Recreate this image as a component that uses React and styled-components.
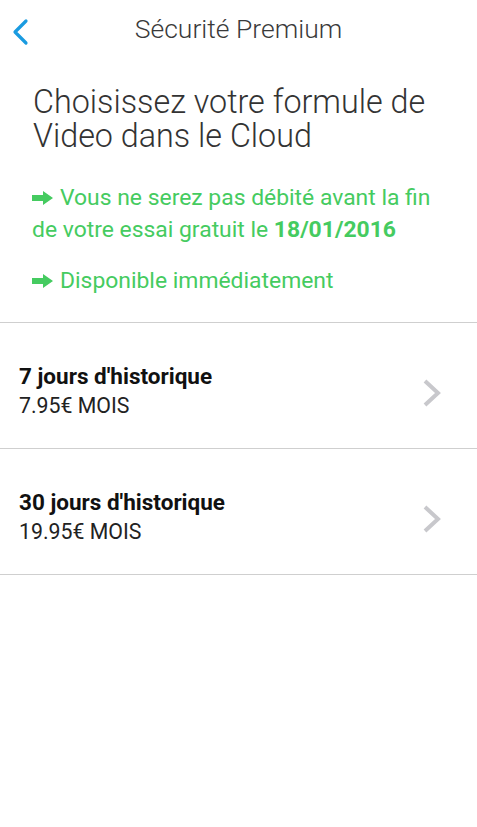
import React from "react";
import styled, { createGlobalStyle } from "styled-components";

const Global = createGlobalStyle`
  html, body { margin: 0; padding: 0; background: #fff; }
  body { font-family: Roboto, "Noto Sans", "Liberation Sans", sans-serif; -webkit-font-smoothing: antialiased; }
`;

const Page = styled.div`
  width: 477px;
  min-height: 827px;
  background: #fff;
`;

const Header = styled.header`
  position: relative;
  height: 58px;
  display: flex;
  align-items: center;
  justify-content: center;
`;

const BackButton = styled.button`
  position: absolute;
  left: 8px;
  top: 18px;
  border: 0;
  background: none;
  padding: 0;
  width: 24px;
  height: 28px;
  display: flex;
  align-items: center;
  justify-content: center;
`;

const Title = styled.h1`
  margin: 0;
  font-size: 26.5px;
  line-height: 58px;
  font-weight: 300;
  color: #3a3a3a;
`;

const Headline = styled.h2`
  margin: 27px 0 0;
  padding: 0 33px;
  font-size: 32.3px;
  line-height: 34px;
  font-weight: 300;
  color: #333;
`;

const Note = styled.p`
  margin: ${(p) => p.$top}px 0 0;
  padding: 0 32px;
  font-size: 22.9px;
  line-height: 32px;
  color: #45cb60;
  b { font-weight: 700; }
`;

const Arrow = styled.svg`
  display: inline-block;
  width: 21px;
  height: 14px;
  margin-right: 7px;
  vertical-align: 0px;
`;

const List = styled.ul`
  list-style: none;
  margin: 25px 0 0;
  padding: 0;
  border-top: 1px solid #cfcfcf;
`;

const Row = styled.li`
  box-sizing: border-box;
  height: 126px;
  padding: 10px 35px 0 19px;
  display: flex;
  align-items: center;
  justify-content: space-between;
  border-bottom: 1px solid #cfcfcf;
`;

const RowText = styled.div`
  display: flex;
  flex-direction: column;
  gap: 2px;
`;

const RowTitle = styled.div`
  font-size: 22.5px;
  line-height: 27px;
  font-weight: 700;
  color: #111;
`;

const RowPrice = styled.div`
  font-size: 21.3px;
  line-height: 27px;
  font-weight: 400;
  color: #222;
`;

const Chevron = styled.svg`
  width: 20px;
  height: 28px;
  margin-top: 4px;
`;

const GreenArrow = () => (
  <Arrow viewBox="0 0 21 14">
    <path d="M0 4 H11 V0 L21 7 L11 14 V10 H0 Z" fill="#45cb60" />
  </Arrow>
);

const plans = [
  { title: "7 jours d'historique", price: "7.95€ MOIS" },
  { title: "30 jours d'historique", price: "19.95€ MOIS" },
];

export default function App() {
  return (
    <Page>
      <Global />
      <Header>
        <BackButton aria-label="Retour">
          <svg width="20" height="28" viewBox="0 0 20 28">
            <path d="M16 3 L5 14 L16 25" fill="none" stroke="#1a9be0" strokeWidth="3.2" strokeLinecap="round" strokeLinejoin="round" />
          </svg>
        </BackButton>
        <Title>Sécurité Premium</Title>
      </Header>
      <Headline>
        Choisissez votre formule de
        <br />
        Video dans le Cloud
      </Headline>
      <Note $top={29}>
        <GreenArrow />
        Vous ne serez pas débité avant la fin de votre essai gratuit le <b>18/01/2016</b>
      </Note>
      <Note $top={19}>
        <GreenArrow />
        Disponible immédiatement
      </Note>
      <List>
        {plans.map((p) => (
          <Row key={p.title}>
            <RowText>
              <RowTitle>{p.title}</RowTitle>
              <RowPrice>{p.price}</RowPrice>
            </RowText>
            <Chevron viewBox="0 0 20 28">
              <path d="M3 2 L16 14 L3 26" fill="none" stroke="#c8c8cc" strokeWidth="4" strokeLinejoin="miter" />
            </Chevron>
          </Row>
        ))}
      </List>
    </Page>
  );
}
